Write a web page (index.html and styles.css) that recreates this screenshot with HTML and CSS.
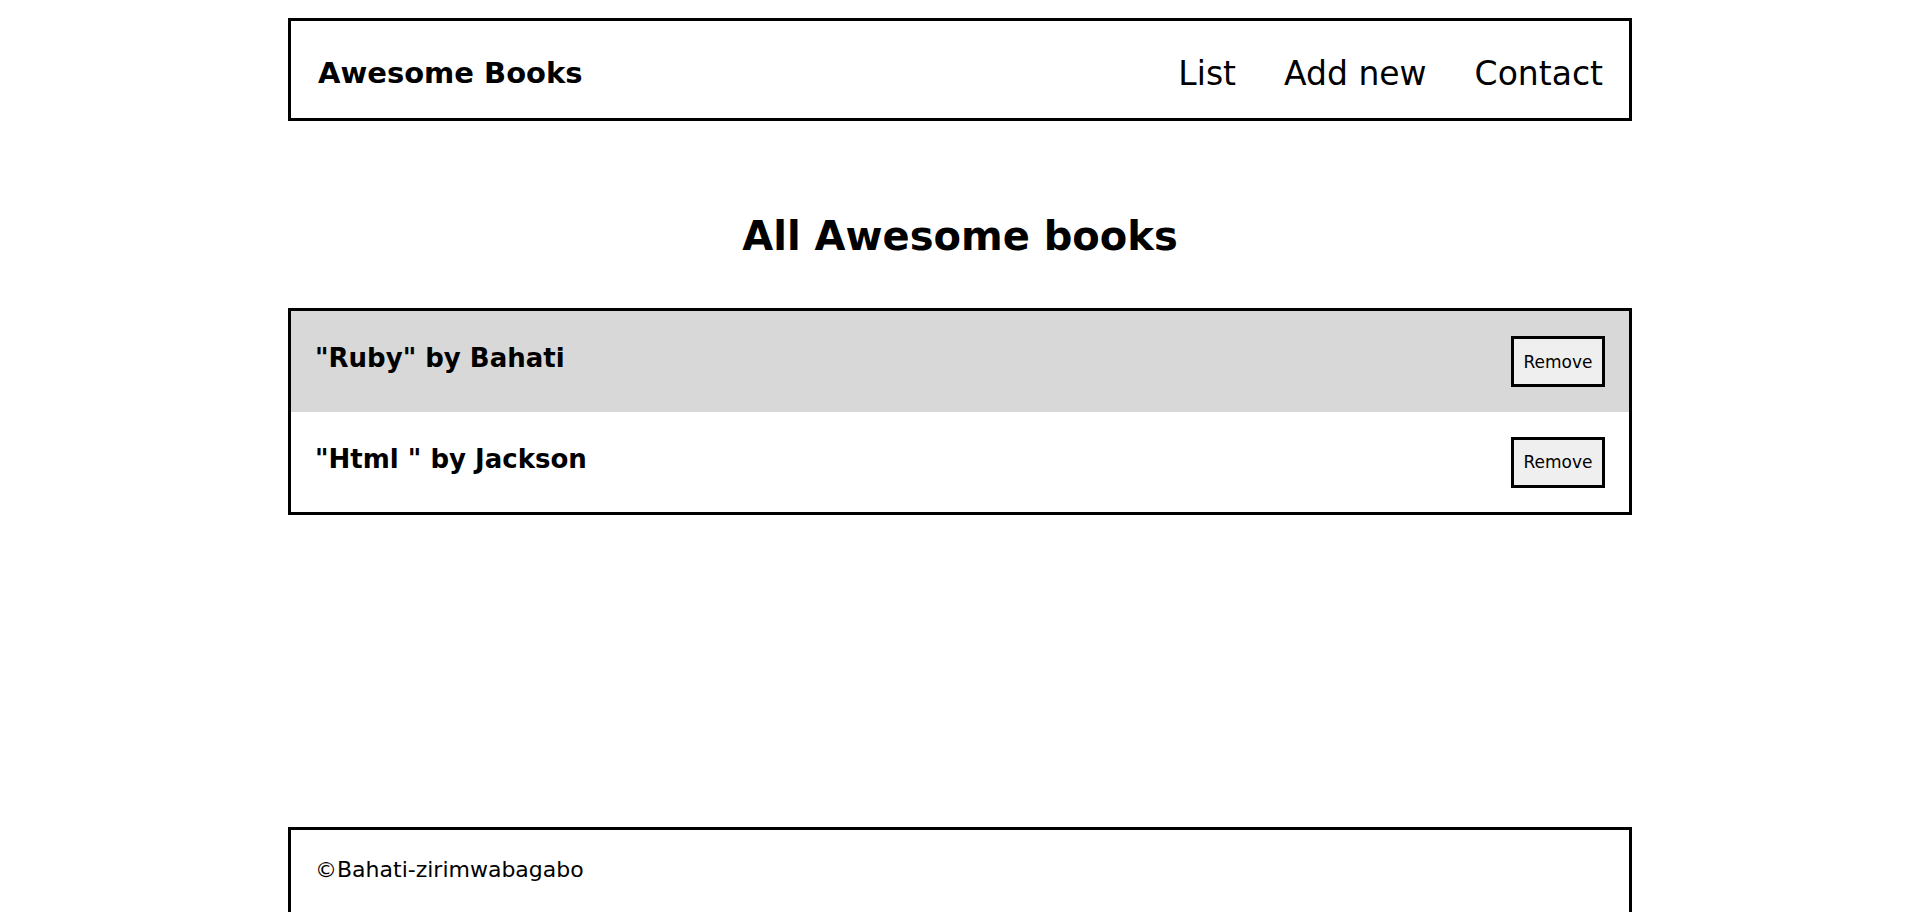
FILE: index.html
```html
<!DOCTYPE html>
<html lang="en">
<head>
<meta charset="utf-8">
<title>Awesome Books</title>
<link rel="stylesheet" href="styles.css">
</head>
<body>
<div class="page">
  <header class="topbar">
    <h2 class="logo">Awesome Books</h2>
    <nav class="nav">
      <a href="#" class="nav-link">List</a>
      <a href="#" class="nav-link">Add new</a>
      <a href="#" class="nav-link">Contact</a>
    </nav>
  </header>
  <main class="main">
    <h1 class="title">All Awesome books</h1>
    <ul class="books">
      <li class="book book-alt">
        <p class="book-name">"Ruby" by Bahati</p>
        <button class="remove">Remove</button>
      </li>
      <li class="book">
        <p class="book-name">"Html " by Jackson</p>
        <button class="remove">Remove</button>
      </li>
    </ul>
  </main>
  <footer class="footer">
    <p class="copy">&copy;Bahati-zirimwabagabo</p>
  </footer>
</div>
</body>
</html>
```

FILE: styles.css
```css
* { box-sizing: border-box; }

html, body {
  margin: 0;
  padding: 0;
  background: #fff;
  color: #000;
}

body {
  font-family: "Comic Sans MS", "DejaVu Sans", sans-serif;
}

.page {
  width: 1344px;
  margin: 0 auto;
  padding-top: 18px;
}

.topbar {
  height: 103px;
  border: 3px solid #000;
  display: flex;
  justify-content: space-between;
  align-items: center;
  padding: 7px 26px 0 27px;
}

.logo {
  margin: 0;
  font-size: 29px;
  font-weight: bold;
  line-height: 1;
}

.nav {
  display: flex;
  gap: 48px;
}

.nav-link {
  color: #000;
  text-decoration: none;
  font-size: 33px;
  line-height: 1;
}

.main {
  padding-top: 91px;
}

.title {
  margin: 0 0 47px;
  text-align: center;
  font-size: 40px;
  line-height: 49px;
  font-weight: bold;
}

.books {
  list-style: none;
  margin: 0;
  padding: 0;
  border: 3px solid #000;
}

.book {
  display: flex;
  justify-content: space-between;
  align-items: center;
  height: 100px;
  padding: 0 24px 0 24px;
}

.book-alt {
  height: 101px;
  background: #d8d8d8;
}

.book-name {
  margin: 0 0 7px;
  font-size: 26px;
  font-weight: bold;
  line-height: 1;
}

.remove {
  width: 94px;
  height: 51px;
  border: 3px solid #000;
  background: #efefef;
  font-family: inherit;
  font-size: 17px;
  color: #000;
  padding: 0;
}

.footer {
  margin-top: 312px;
  height: 110px;
  border: 3px solid #000;
  padding: 28px 24px 0;
}

.copy {
  margin: 0;
  font-size: 22px;
  line-height: 24px;
}
```
